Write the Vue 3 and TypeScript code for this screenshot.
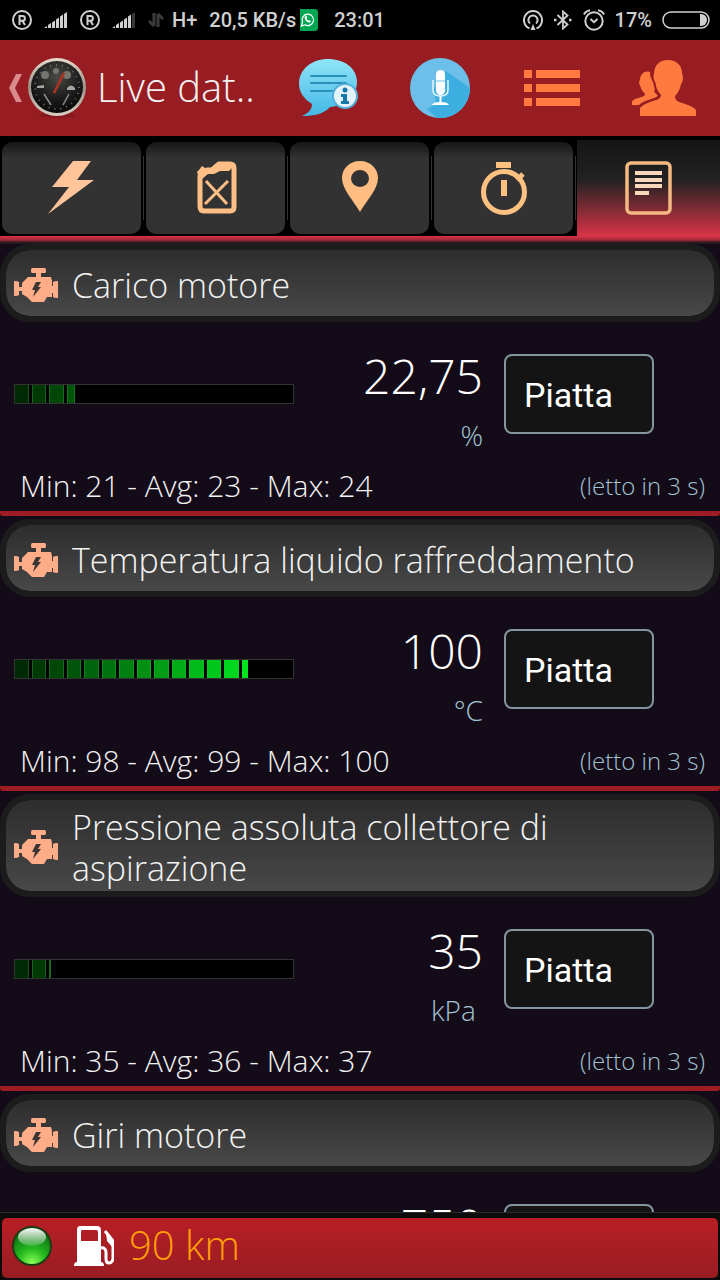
<script setup lang="ts">
interface Sensor {
  id: string
  name: string
  value: string
  unit?: string
  ratio: number
  stats?: string
}

const SEGMENTS = 16

const sensors: Sensor[] = [
  { id: 'load', name: 'Carico motore', value: '22,75', unit: '%', ratio: 0.2225, stats: 'Min: 21 - Avg: 23 - Max: 24' },
  { id: 'coolant', name: 'Temperatura liquido raffreddamento', value: '100', unit: '°C', ratio: 0.84, stats: 'Min: 98 - Avg: 99 - Max: 100' },
  { id: 'map', name: 'Pressione assoluta collettore di aspirazione', value: '35', unit: 'kPa ', ratio: 0.135, stats: 'Min: 35 - Avg: 36 - Max: 37' },
  { id: 'rpm', name: 'Giri motore', value: '750', ratio: 0.1 },
]

const tabs = [
  { id: 'power', label: 'Prestazioni' },
  { id: 'fuel', label: 'Carburante' },
  { id: 'place', label: 'Posizione' },
  { id: 'timer', label: 'Cronometro' },
  { id: 'data', label: 'Dati' },
]

function fill(ratio: number, index: number): number {
  return Math.round(Math.min(1, Math.max(0, ratio * SEGMENTS - index)) * 100)
}

function shade(index: number): string {
  const t = Math.min(1, index / 13)
  return `rgb(0, ${Math.round(42 + t * 186)}, ${Math.round(4 + t * 28)})`
}

function edge(index: number): string {
  const t = Math.min(1, index / 13)
  return `rgb(${Math.round(26 - t * 26)}, ${Math.round(84 + t * 144)}, ${Math.round(34 - t * 2)})`
}
</script>

<template>
  <div class="screen">
    <div class="status">
      <div class="status-group">
        <template v-for="n in 2" :key="n">
          <svg class="s20" viewBox="0 0 20 20"><circle cx="10" cy="10" r="9" fill="none" stroke="#d0d0d0" stroke-width="2" /><path d="M7.500 15V6h3a2.300 2.300 0 0 1 0 4.800H7.500M10.500 11l2.500 4" fill="none" stroke="#d0d0d0" stroke-width="2" /></svg>
          <svg class="s24" viewBox="0 0 24 20"><path d="M0 18l3-2v2zM4 15l3-2v5H4zM8 12.500l3-2V18H8zM12 9.500l3-2V18h-3zM16 6.500l3-2V18h-3z" fill="#d0d0d0" /><path d="M20 4l3-2v16h-3z" :fill="n === 1 ? '#d0d0d0' : '#383838'" /></svg>
        </template>
        <svg class="s16" viewBox="0 0 16 20"><path d="M6 3v13M1 11l5 5M10 17V4M15 9l-5-5" fill="none" stroke="#3c3c3c" stroke-width="3" /></svg>
        <span class="net">H+</span>
        <span class="speed">20,5 KB/s</span>
        <svg class="wa" viewBox="0 0 18 22"><path d="M0 0h15a3 3 0 0 1 3 3v16a3 3 0 0 1-3 3H0z" fill="#00a651" /><path d="M1.500 17l1-4a5.700 5.700 0 1 1 2.400 2.800z" fill="none" stroke="#fff" stroke-width="1.200" /><path d="M4.500 8c.8 4 2.500 5.500 5.500 5.500l1-1.500-2-1-1 .8L6.500 9.500l.7-1-.8-2z" fill="#fff" /></svg>
        <span class="clock">23:01</span>
      </div>
      <div class="status-group right">
        <svg class="s20" viewBox="0 0 20 20"><path d="M6.500 18.400a9 9 0 1 1 7 0M7 13.500a4.600 4.600 0 1 1 6 0" fill="none" stroke="#d0d0d0" stroke-width="2" /><path d="M10 14l2.500 6h-5z" fill="#d0d0d0" /></svg>
        <svg class="s20" viewBox="0 0 20 20"><path d="M4.500 5l10 9.500L10 18.500v-17l4.500 4L4.500 15" fill="none" stroke="#d0d0d0" stroke-width="1.800" /><path d="M1 8.800h2.500v2.500H1zM16 8.800h2.500v2.500H16z" fill="#d0d0d0" /></svg>
        <svg class="s22" viewBox="0 0 22 22"><circle cx="11" cy="12" r="8.700" fill="none" stroke="#d0d0d0" stroke-width="2" /><path d="M7.500 10l3.500 3.200L14.500 10M1 5.500Q2.500 2 7 1.200M21 5.500Q19.500 2 15 1.200" fill="none" stroke="#d0d0d0" stroke-width="2" /></svg>
        <span>17%</span>
        <svg class="battery" viewBox="0 0 48 18"><rect x="1" y="1" width="46" height="16" rx="8" fill="none" stroke="#d0d0d0" stroke-width="1.500" /><path d="M38 3h1a6 6 0 0 1 0 12h-1z" fill="#d0d0d0" /></svg>
      </div>
    </div>

    <header class="bar">
      <button class="home" type="button">
        <svg class="back" viewBox="0 0 14 28"><path d="M8 0h6L7 14l7 14H8L1 14z" fill="#d98a8c" /></svg>
        <svg class="gauge" viewBox="0 0 60 60">
          <defs>
            <linearGradient id="rim" x1="0" y1="0" x2="0" y2="1"><stop offset="0" stop-color="#e8dccb" /><stop offset=".5" stop-color="#9a9389" /><stop offset="1" stop-color="#d8cec2" /></linearGradient>
            <radialGradient id="dial" cx=".5" cy=".3" r=".7"><stop offset="0" stop-color="#4a4b48" /><stop offset=".6" stop-color="#1c1d1c" /><stop offset="1" stop-color="#080808" /></radialGradient>
          </defs>
          <ellipse cx="30" cy="57" rx="18" ry="3" fill="#86191e" />
          <circle cx="30" cy="29" r="29" fill="url(#rim)" />
          <circle cx="30" cy="29" r="26" fill="url(#dial)" />
          <circle cx="30" cy="29" r="22" fill="none" stroke="#6b6b65" stroke-width="2" stroke-dasharray="1 5" />
          <g fill="#74756f"><circle cx="18" cy="17" r="4" /><circle cx="40" cy="17" r="4" /><circle cx="29" cy="13" r="3" /></g>
          <path d="M10 28l7-1v3h-7zM40 30q4-5 8 0v2h-8z" fill="#a4a59f" />
          <path d="M17 36l7 11M42 36l-6 11" stroke="#8d8e88" stroke-width="1.500" />
          <path d="M27 35l10-20" stroke="#b23322" stroke-width="2.500" />
        </svg>
        <span class="title">Live dat..</span>
      </button>
      <button class="action" type="button" aria-label="Informazioni">
        <svg class="i60" viewBox="0 0 60 60">
          <defs><linearGradient id="bubble" x1="0" y1="0" x2="0" y2="1"><stop offset="0" stop-color="#91e4f8" /><stop offset="1" stop-color="#42b8e6" /></linearGradient></defs>
          <path d="M30 1c16 0 29 9 29 23S46 48 32 49c-6 7-16 9-28 9 7-3 10-7 10-12C6 41 1 34 1 26 1 11 14 1 30 1z" fill="url(#bubble)" />
          <path d="M13 18h35M13 25h35M13 33h24" stroke="#2c8fbc" stroke-width="2" stroke-linecap="round" />
          <circle cx="47" cy="38" r="13" fill="#53aeda" /><circle cx="47" cy="38" r="11" fill="#e4f3fa" />
          <circle cx="47" cy="32" r="2.500" fill="#1879a8" /><path d="M43 36h6v7h2v3h-8v-3h2v-4h-2z" fill="#1879a8" />
        </svg>
      </button>
      <button class="action" type="button" aria-label="Voce">
        <svg class="i60" viewBox="0 0 60 60">
          <circle cx="30" cy="30" r="30" fill="#6bbfe9" />
          <path d="M36 13l24 17A30 30 0 0 1 30 60h-3L17 51l9-5-2-15z" fill="#3daee0" />
          <rect x="26" y="12" width="9" height="25" rx="4.500" fill="#fff" /><path d="M26 23h9" stroke="#9bd3ee" stroke-width="1.500" />
          <path d="M23 22v10q0 6 7.500 6t7.500-6V22" fill="none" stroke="#e8f6fc" stroke-width="1.500" />
          <path d="M30.500 38v7" stroke="#fff" stroke-width="2" /><path d="M22 47q1-3 8.500-3t8.500 3z" fill="#fff" />
        </svg>
      </button>
      <button class="action" type="button" aria-label="Elenco">
        <svg class="i60" viewBox="0 0 60 60"><path d="M2 12h8v8H2zM14 12h44v8H14zM2 26h8v8H2zM14 26h44v8H14zM2 40h8v8H2zM14 40h44v8H14z" fill="#ff7a3e" /></svg>
      </button>
      <button class="action" type="button" aria-label="Utenti">
        <svg class="people" viewBox="0 0 64 60">
          <path d="M36 2c9 0 14 6 14 13l1 4c0 4-1 6-2 7-1 6-4 10-6 12 0 4 3 6 7 7 9 3 14 5 14 8v5H8v-7c0-3 5-5 13-8 5-1 8-3 8-6-2-3-5-6-6-12-2-2-2-6-1-9C22 8 27 2 36 2z" fill="#ff7a3e" />
          <path d="M19 14c-7-2-10 2-11 7l-1 4 2 5c1 4 4 4 4 7-2 3-13 3-13 7v3h7c5-5 13-5 19-8 0-3-4-4-4-6 1-1 2-3 2-6-4-3-4-7-5-13z" fill="#ff7a3e" />
          <path d="M19 13c-1 8 4 9 4 15 0 4 4 8 4 10-3 4-14 4-18 10" fill="none" stroke="#981d23" stroke-width="2" />
        </svg>
      </button>
    </header>

    <nav class="tabs">
      <button v-for="t in tabs" :key="t.id" type="button" class="tab" :class="{ active: t.id === 'data' }" :aria-label="t.label">
        <svg class="i60" viewBox="0 0 60 60">
          <path v-if="t.id === 'power'" d="M31 3h18L35 22h17L6 56l21-27H10z" fill="#ffc49a" />
          <g v-else-if="t.id === 'fuel'">
            <path d="M14 18v30q0 5 4 5h26q4 0 4-4V10q0-4-4-4H33l-7 6h-5z" fill="none" stroke="#fdbf86" stroke-width="5" stroke-linejoin="round" />
            <path d="M11 15q0-2 2-3l3-4 6 4 5-1 7-6h10l3 4-4 4H34l-6 3h-6l-6 5z" fill="#fdbf86" />
            <path d="M20 23l21 23M42 23L19 46" stroke="#fdbf86" stroke-width="3" />
          </g>
          <path v-else-if="t.id === 'place'" fill-rule="evenodd" d="M30 3c11 0 18 8 18 17 0 11-11 22-18 34C23 42 12 31 12 20 12 11 19 3 30 3zm0 9a9 8.500 0 1 0 0 17 9 8.500 0 0 0 0-17z" fill="#ffbd82" />
          <g v-else-if="t.id === 'timer'">
            <circle cx="30" cy="34" r="20.500" fill="none" stroke="#fdc182" stroke-width="5" />
            <path d="M22 4h15v6H22zM27 22h6v16h-6z" fill="#fdc182" /><path d="M43 22l6-6" stroke="#fdc182" stroke-width="5" />
          </g>
          <g v-else>
            <rect x="8" y="5" width="43" height="50" rx="4" fill="none" stroke="#f5b981" stroke-width="3.500" />
            <path d="M16 15h27M16 22h27M16 28h27M16 35h14" stroke="#f8d8ba" stroke-width="4" />
          </g>
        </svg>
      </button>
    </nav>

    <main class="list">
      <section v-for="s in sensors" :key="s.id" class="card">
        <h2 class="name">
          <svg class="engine" viewBox="0 0 44 36">
            <path d="M18 0h13q1 0 1 2.500T31 5h-4v4h10l1 4v5h1v-4q1-1 5-1v17q-4 0-5-1v-4h-1v4h-5l-3 5H18l-5-5-5-3v-3H5v4q-1 1-5 1V13q4 0 5 1v5h3v-4l6-6h8V5h-4q-1 0-1-2.500T18 0z" fill="#ffac88" />
            <path d="M22 14h5l-3 5h3l-8 10 2-7h-3z" fill="#3b3634" />
          </svg>
          <span>{{ s.name }}</span>
        </h2>
        <div class="reading">
          <div class="track" role="img" :aria-label="`${s.name} ${s.value}`">
            <span v-for="i in SEGMENTS" :key="i" class="slot">
              <i v-if="fill(s.ratio, i - 1) > 0" class="fill" :style="{ width: fill(s.ratio, i - 1) + '%', background: shade(i - 1), borderColor: edge(i - 1) }"></i>
            </span>
          </div>
          <div class="amount">
            <div class="value">{{ s.value }}</div>
            <div v-if="s.unit" class="unit">{{ s.unit }}</div>
          </div>
          <select class="mode" :aria-label="`Vista ${s.name}`"><option>Piatta</option></select>
        </div>
        <div v-if="s.stats" class="stats">
          <span>{{ s.stats }}</span>
          <small>(letto in 3 s)</small>
        </div>
      </section>
    </main>

    <footer class="foot">
      <div class="foot-bar">
        <svg class="led" viewBox="0 0 40 40">
          <defs>
            <radialGradient id="led" cx=".5" cy=".95" r=".85"><stop offset="0" stop-color="#8cff5a" /><stop offset=".45" stop-color="#25b81f" /><stop offset="1" stop-color="#0a6b10" /></radialGradient>
            <linearGradient id="shine" x1="0" y1="0" x2="0" y2="1"><stop offset="0" stop-color="#fff" /><stop offset="1" stop-color="#fff" stop-opacity=".15" /></linearGradient>
          </defs>
          <circle cx="20" cy="20" r="19" fill="url(#led)" stroke="#1b3d14" stroke-width="2" />
          <ellipse cx="20" cy="11" rx="14" ry="9" fill="url(#shine)" />
        </svg>
        <svg class="pump" viewBox="0 0 40 40">
          <path fill-rule="evenodd" d="M6 0h17q4 0 4 4v32q3 0 3 4H0q0-4 3-4V4q0-4 3-4zm2 4q-1 0-1 2v9h17V6q0-2-2-2z" fill="#fff" />
          <path d="M27 22q5-1 5 5v6q0 4 3 4t4-4V15l-8-10" fill="none" stroke="#fff" stroke-width="3" /><path d="M32 7l8 8v8l-7-8z" fill="#fff" />
        </svg>
        <span class="range">90 km</span>
      </div>
    </footer>
  </div>
</template>

<style>
body {
  background: #000;
}
</style>

<style scoped>
* {
  box-sizing: border-box;
}
.screen {
  display: flex;
  flex-direction: column;
  height: 100vh;
  overflow: hidden;
  background: #140b19;
  color: #f2f2f2;
  font-family: "Open Sans", "Noto Sans", sans-serif;
  font-weight: 300;
}
svg {
  display: block;
  flex: none;
}
button {
  border: 0;
  padding: 0;
  background: none;
  color: inherit;
  font: inherit;
  display: flex;
  align-items: center;
  justify-content: center;
}
.status {
  display: flex;
  justify-content: space-between;
  align-items: center;
  flex: none;
  height: 40px;
  padding: 0 10px 0 12px;
  background: #000;
  color: #d0d0d0;
  font: 500 20px/24px Roboto, sans-serif;
}
.status-group {
  display: flex;
  align-items: center;
  gap: 12px;
}
.status-group.right {
  gap: 10px;
}
.s16 { width: 16px; height: 20px; }
.s20 { width: 20px; height: 20px; }
.s22 { width: 22px; height: 22px; }
.s24 { width: 24px; height: 20px; }
.net {
  margin-left: -4px;
}
.wa {
  width: 18px;
  height: 22px;
  margin-left: -8px;
}
.clock {
  margin-left: 4px;
}
.battery {
  width: 48px;
  height: 18px;
}
.bar {
  display: flex;
  flex: none;
  height: 96px;
  background: #981d23;
}
.home {
  flex: 1;
  justify-content: flex-start;
  padding-left: 8px;
}
.back {
  width: 14px;
  height: 28px;
  margin-right: 5px;
}
.gauge {
  width: 60px;
  height: 60px;
}
.title {
  margin-left: 10px;
  padding-bottom: 2px;
  font-size: 40px;
  line-height: 48px;
}
.action {
  width: 112px;
}
.i60 {
  width: 60px;
  height: 60px;
}
.people {
  width: 64px;
  height: 60px;
}
.tabs {
  display: grid;
  grid-template-columns: repeat(5, 1fr);
  flex: none;
  height: 100px;
  padding-top: 4px;
  background: #000;
}
.tab {
  position: relative;
  margin: 2px 3px 2px 2px;
  border-radius: 10px;
  background: linear-gradient(#161616, #323232 16px);
}
.tab:not(.active)::after {
  content: "";
  position: absolute;
  top: 14px;
  bottom: 14px;
  right: -3px;
  width: 1px;
  background: #303030;
}
.tab.active {
  margin: 0 0 0 1px;
  border-radius: 0;
  background: linear-gradient(#151515, #222 42%, #d83446);
}
.list {
  flex: 1;
  min-height: 0;
  overflow-y: auto;
  scrollbar-width: none;
}
.list::before {
  content: "";
  display: block;
  height: 8px;
  background: linear-gradient(#d83446, #a02a38 50%, #301820 80%, #1c1c1c);
}
.card {
  margin-bottom: 3px;
  border-bottom: 5px solid #9d1d24;
  border-radius: 0 0 3px 3px;
}
.name {
  display: flex;
  align-items: center;
  gap: 14px;
  min-height: 78px;
  margin: 0;
  padding: 7px 8px 2px;
  border: 6px solid #1c1c1c;
  border-radius: 30px;
  background: linear-gradient(#2d2d2d, #484848) padding-box;
  font-size: 34px;
  line-height: 41px;
  font-weight: 300;
}
.engine {
  width: 44px;
  height: 36px;
}
.reading {
  display: flex;
  align-items: flex-start;
  height: 140px;
  padding: 32px 66px 0 14px;
}
.track {
  display: flex;
  gap: 3px;
  flex: none;
  width: 280px;
  height: 20px;
  margin-top: 30px;
  padding-right: 3px;
  background: #000;
  outline: 1px solid #333;
  outline-offset: -1px;
}
.slot {
  flex: 1;
}
.fill {
  display: block;
  height: 100%;
  border: 1px solid;
}
.amount {
  flex: 1;
  text-align: right;
}
.value {
  color: #fff;
  font-size: 48px;
  line-height: 44px;
}
.unit {
  margin-top: 22px;
  color: #a3c3d3;
  font-size: 28px;
  line-height: 30px;
  white-space: pre;
}
.mode {
  appearance: none;
  flex: none;
  width: 150px;
  height: 80px;
  margin-left: 21px;
  padding: 2px 18px 0;
  border: 2px solid #84959f;
  border-radius: 8px;
  background: #141414;
  color: #fff;
  font: 400 34px/40px Roboto, sans-serif;
}
.stats {
  display: flex;
  justify-content: space-between;
  align-items: center;
  height: 49px;
  padding: 0 15px 2px 20px;
  font-size: 30px;
  line-height: 40px;
}
.stats small {
  color: #a3c3d3;
  font-size: 24px;
}
.foot {
  flex: none;
  padding: 5px 2px 2px;
  border-top: 1px solid #2a2a2a;
  background: #0c0c0c;
}
.foot-bar {
  display: flex;
  align-items: center;
  height: 60px;
  padding: 0 10px 4px;
  border-radius: 5px;
  background: linear-gradient(#b91e25, #981d23);
  color: #ff9f0a;
  font-size: 40px;
  line-height: 48px;
}
.range {
  padding-bottom: 2px;
}
.led {
  width: 40px;
  height: 40px;
  margin-right: 22px;
}
.pump {
  width: 40px;
  height: 40px;
  margin-right: 15px;
}
</style>
